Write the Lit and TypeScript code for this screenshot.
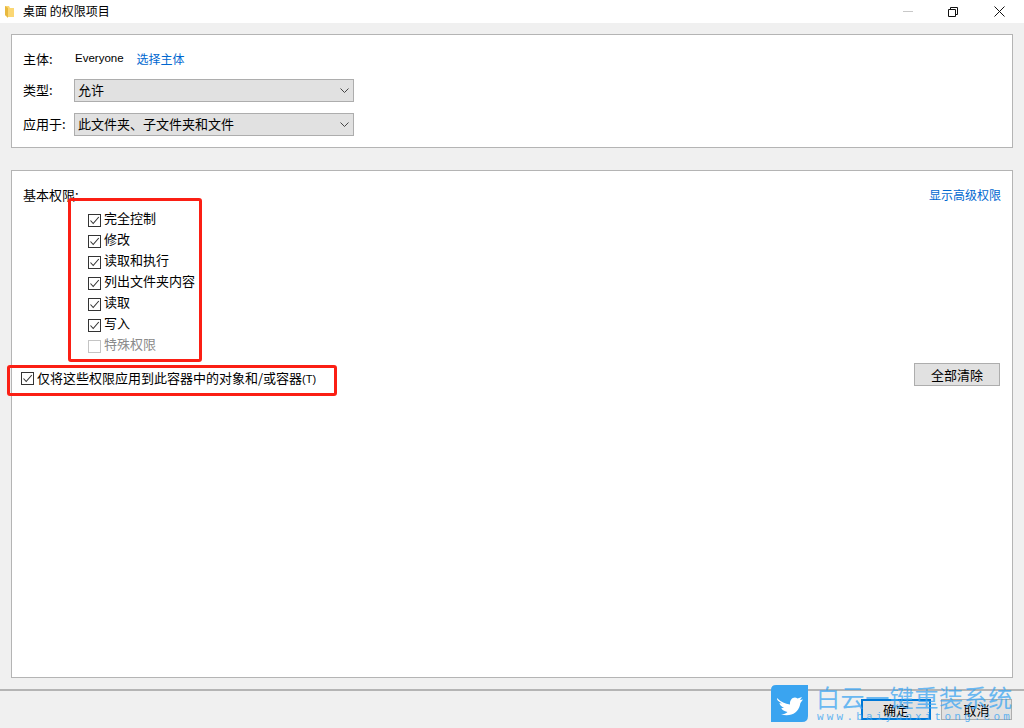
import { LitElement, html, css, svg } from "lit";
import { customElement } from "lit/decorators.js";

const perms = ["完全控制", "修改", "读取和执行", "列出文件夹内容", "读取", "写入"];

const chevron = svg`<svg class="chev" width="9" height="5" viewBox="0 0 9 5"><path d="M0.5 0.5 L4.5 4.5 L8.5 0.5" fill="none" stroke="#444" stroke-width="1"/></svg>`;
const check = svg`<svg class="tick" width="13" height="13" viewBox="0 0 13 13"><path d="M2.5 6.5 L5.2 9.5 L10.8 3" fill="none" stroke="#333" stroke-width="1.1"/></svg>`;

@customElement("app-root")
export class AppRoot extends LitElement {
  static styles = css`
    :host { display: block; width: 1024px; height: 728px; position: relative; overflow: hidden; background: #f0f0f0; font-family: "Noto Sans CJK SC", "Noto Sans", sans-serif; font-size: 13px; color: #000; }
    * { box-sizing: border-box; }
    .title { height: 23px; background: #fff; display: flex; align-items: center; padding-left: 5px; font-size: 12px; }
    .folder { margin-right: 9px; }
    .tname { line-height: 21px; height: 23px; }
    .wc { margin-left: auto; display: flex; align-items: center; height: 23px; padding-right: 19px; }
    .wmin { margin-right: 35px; }
    .wmax { margin-right: 36px; }
    .content { padding: 11px 11px 0; display: flex; flex-direction: column; gap: 22px; }
    .panel { background: #fff; border: 1px solid #b4b4b4; width: 1002px; }
    .p1 { height: 114px; padding: 14px 11px 0; display: flex; flex-direction: column; }
    .row { display: flex; align-items: center; }
    .r0 { height: 18px; margin-bottom: 12px; }
    .r0 .lbl { width: 52px; }
    .r1 { height: 23px; margin-bottom: 11px; }
    .lbl { width: 51px; }
    .r1 .lbl { margin-top: -2px; }
    .ever { margin-right: 13px; font-family: "Liberation Sans", sans-serif; font-size: 11.5px; }
    .link { color: #0067d0; font-size: 12px; }
    .select { width: 280px; height: 23px; background: #e1e1e1; border: 1px solid #adadad; display: flex; align-items: center; padding: 0 4px 0 3px; justify-content: space-between; }
    .select span { margin-top: -3px; }
    .p2 { height: 508px; position: relative; padding: 14px 11px 0; display: flex; flex-direction: column; }
    .head { display: flex; justify-content: space-between; line-height: 20px; height: 20px; }
    .list { margin: 2px 0 0 65px; display: flex; flex-direction: column; }
    .list .box { transform: translateY(3px); }
    .item { display: flex; align-items: center; height: 21px; gap: 3px; }
    .box { width: 13px; height: 13px; border: 1px solid #333; background: #fff; display: block; flex: none; position: relative; }
    .tick { display: block; position: absolute; left: -1px; top: -1px; }
    .dis { color: #8a8a8a; }
    .dis .box { border-color: #c4c4c4; }
    .apply { display: flex; justify-content: space-between; align-items: flex-start; margin-top: 9px; height: 26px; padding-right: 1px; }
    .apply .item { margin: 4px 0 0 -2px; }
    .apply .box { transform: translateY(1px); }
    .acc { font-family: "Liberation Sans", sans-serif; font-size: 11px; }
    .btn { background: #e1e1e1; border: 1px solid #adadad; display: flex; align-items: center; justify-content: center; height: 23px; }
    .clear { width: 86px; }
    .foot { position: absolute; left: 0; right: 0; top: 689px; height: 39px; border-top: 2px solid #b4b4b4; display: flex; justify-content: flex-end; gap: 10px; padding: 8px 12px 0 0; }
    .foot .btn { width: 70px; height: 21px; }
    .foot .cancel { width: 71px; }
    .foot .ok { border: 2px solid #0078d7; }
    .frame { position: absolute; border: 3px solid #fb1f14; border-radius: 3px; pointer-events: none; }
    .f1 { left: 68px; top: 198px; width: 134px; height: 164px; }
    .f2 { left: 7px; top: 365px; width: 330px; height: 31px; }
    .wm { position: absolute; left: 771px; top: 685px; width: 253px; height: 43px; pointer-events: none; }
    .bird { position: absolute; left: 0; top: 0; width: 38px; height: 38px; }
    .wmt { position: absolute; left: 45px; top: -3px; font-size: 24px; line-height: 30px; letter-spacing: 0.6px; color: #3ea6f2; opacity: .75; white-space: nowrap; }
    .wms { position: absolute; left: 46px; top: 26px; font-family: "Liberation Mono", monospace; font-size: 11px; line-height: 12px; letter-spacing: 3.2px; color: #3ea6f2; opacity: .8; white-space: nowrap; }
  `;

  private renderItem(t: unknown, on = true) {
    return html`<div class="item ${on ? "" : "dis"}"><span class="box">${on ? check : ""}</span><span>${t}</span></div>`;
  }

  render() {
    return html`
      <div class="title">
        <svg class="folder" width="9" height="12" viewBox="0 0 9 12"><path d="M0 0 H4 L5 2 H9 V11 H3 L0 9 Z" fill="#fbd774"/><path d="M0 0 L3 2 V12 L0 9 Z" fill="#e8b93f"/></svg>
        <span class="tname">桌面 的权限项目</span>
        <div class="wc">
          <svg class="wmin" width="10" height="1"><rect width="10" height="1" fill="#c8c8c8"/></svg>
          <svg class="wmax" width="10" height="10" viewBox="0 0 10 10"><path d="M0.5 2.5 H7.5 V9.5 H0.5 Z M2.5 2.5 V0.5 H9.5 V7.5 H7.5" fill="none" stroke="#111" stroke-width="1"/></svg>
          <svg width="11" height="11" viewBox="0 0 11 11"><path d="M0.5 0.5 L10.5 10.5 M10.5 0.5 L0.5 10.5" stroke="#111" stroke-width="1"/></svg>
        </div>
      </div>
      <div class="content">
        <div class="panel p1">
          <div class="row r0"><span class="lbl">主体:</span><span class="ever">Everyone</span><span class="link">选择主体</span></div>
          <div class="row r1"><span class="lbl">类型:</span><div class="select"><span>允许</span>${chevron}</div></div>
          <div class="row r1"><span class="lbl">应用于:</span><div class="select"><span>此文件夹、子文件夹和文件</span>${chevron}</div></div>
        </div>
        <div class="panel p2">
          <div class="head"><span>基本权限:</span><span class="link">显示高级权限</span></div>
          <div class="list">
            ${perms.map((p) => this.renderItem(p))}
            ${this.renderItem("特殊权限", false)}
          </div>
          <div class="apply">
            ${this.renderItem(html`仅将这些权限应用到此容器中的对象和/或容器<span class="acc">(T)</span>`)}
            <div class="btn clear">全部清除</div>
          </div>
        </div>
      </div>
      <div class="foot">
        <div class="btn ok">确定</div>
        <div class="btn cancel">取消</div>
      </div>
      <div class="frame f1"></div>
      <div class="frame f2"></div>
      <div class="wm">
        <svg class="bird" viewBox="0 0 38 38">
          <path d="M5 0 H37 V31 Q37 37 31 37 H0 V5 Q0 0 5 0 Z" fill="#3aa4f0"/>
          <path d="M6 13 C10 17 14 19 19 19.5 C18.5 14 23 11 26.5 13.5 L31 12 L29 15 L32 14.5 C30 17 29 18 29 20 C27 28 20 32 10 29.5 C13 29.5 15 28.5 16.5 27 C12 26 10.5 24 10.5 23 L13 23 C9.5 21 8.5 19 8.5 18 L11 18.5 C7.5 16.5 5.5 15 6 13 Z" fill="#fff"/>
        </svg>
        <div class="wmt">白云一键重装系统</div>
        <div class="wms">www.baiyunxitong.com</div>
      </div>
    `;
  }
}
